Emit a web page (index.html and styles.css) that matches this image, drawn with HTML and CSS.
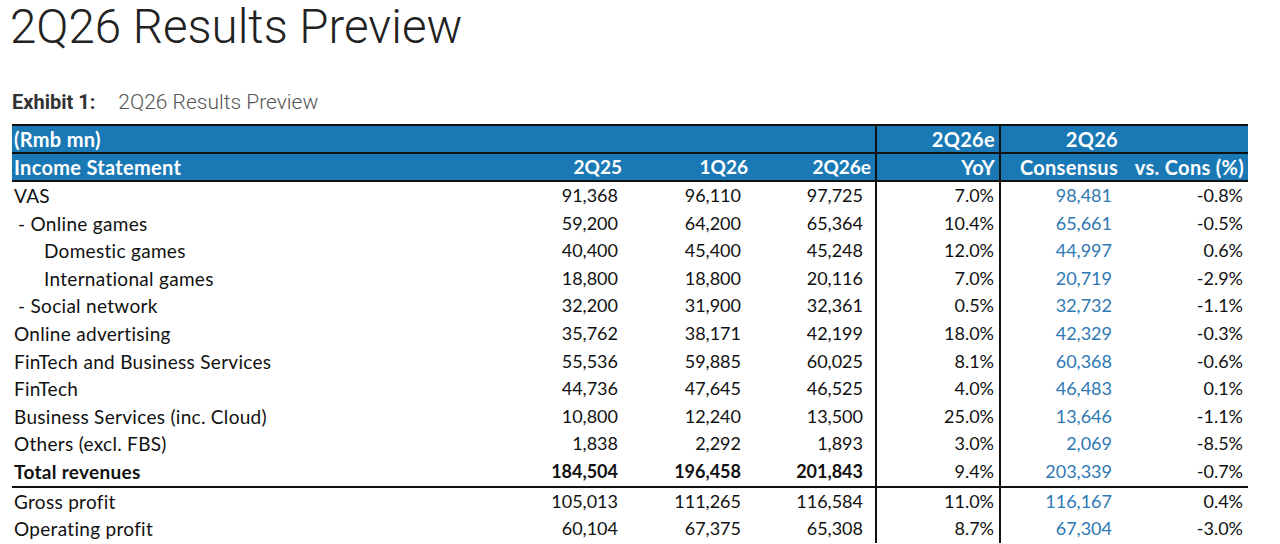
FILE: index.html
```html
<!DOCTYPE html>
<html lang="en">
<head>
<meta charset="utf-8">
<title>2Q26 Results Preview</title>
<link rel="stylesheet" href="styles.css">
</head>
<body>
<h1 class="title">2Q26 Results Preview</h1>
<div class="exhibit"><span class="ex-label">Exhibit 1:</span><span class="ex-name">2Q26 Results Preview</span></div>
<table class="fin">
  <colgroup>
    <col class="c-label"><col class="c-b"><col class="c-c"><col class="c-d"><col class="c-e"><col class="c-f"><col class="c-g">
  </colgroup>
  <thead>
    <tr class="h1row">
      <th class="lbl" colspan="4">(Rmb mn)</th>
      <th class="sep">2Q26e</th>
      <th class="sep">2Q26</th>
      <th></th>
    </tr>
    <tr class="h2row">
      <th class="lbl">Income Statement</th>
      <th class="num">2Q25</th>
      <th class="num">1Q26</th>
      <th class="num">2Q26e</th>
      <th class="sep">YoY</th>
      <th class="sep">Consensus</th>
      <th>vs. Cons (%)</th>
    </tr>
  </thead>
  <tbody>
    <tr><td class="lbl">VAS</td><td>91,368</td><td>96,110</td><td>97,725</td><td class="sep">7.0%</td><td class="sep cons">98,481</td><td>-0.8%</td></tr>
    <tr><td class="lbl ind1">- Online games</td><td>59,200</td><td>64,200</td><td>65,364</td><td class="sep">10.4%</td><td class="sep cons">65,661</td><td>-0.5%</td></tr>
    <tr><td class="lbl ind2">Domestic games</td><td>40,400</td><td>45,400</td><td>45,248</td><td class="sep">12.0%</td><td class="sep cons">44,997</td><td>0.6%</td></tr>
    <tr><td class="lbl ind2">International games</td><td>18,800</td><td>18,800</td><td>20,116</td><td class="sep">7.0%</td><td class="sep cons">20,719</td><td>-2.9%</td></tr>
    <tr><td class="lbl ind1">- Social network</td><td>32,200</td><td>31,900</td><td>32,361</td><td class="sep">0.5%</td><td class="sep cons">32,732</td><td>-1.1%</td></tr>
    <tr><td class="lbl">Online advertising</td><td>35,762</td><td>38,171</td><td>42,199</td><td class="sep">18.0%</td><td class="sep cons">42,329</td><td>-0.3%</td></tr>
    <tr><td class="lbl">FinTech and Business Services</td><td>55,536</td><td>59,885</td><td>60,025</td><td class="sep">8.1%</td><td class="sep cons">60,368</td><td>-0.6%</td></tr>
    <tr><td class="lbl">FinTech</td><td>44,736</td><td>47,645</td><td>46,525</td><td class="sep">4.0%</td><td class="sep cons">46,483</td><td>0.1%</td></tr>
    <tr><td class="lbl">Business Services (inc. Cloud)</td><td>10,800</td><td>12,240</td><td>13,500</td><td class="sep">25.0%</td><td class="sep cons">13,646</td><td>-1.1%</td></tr>
    <tr><td class="lbl">Others (excl. FBS)</td><td>1,838</td><td>2,292</td><td>1,893</td><td class="sep">3.0%</td><td class="sep cons">2,069</td><td>-8.5%</td></tr>
    <tr class="total"><td class="lbl b">Total revenues</td><td class="b">184,504</td><td class="b">196,458</td><td class="b">201,843</td><td class="sep">9.4%</td><td class="sep cons">203,339</td><td>-0.7%</td></tr>
    <tr><td class="lbl">Gross profit</td><td>105,013</td><td>111,265</td><td>116,584</td><td class="sep">11.0%</td><td class="sep cons">116,167</td><td>0.4%</td></tr>
    <tr><td class="lbl">Operating profit</td><td>60,104</td><td>67,375</td><td>65,308</td><td class="sep">8.7%</td><td class="sep cons">67,304</td><td>-3.0%</td></tr>
  </tbody>
</table>
</body>
</html>
```
FILE: styles.css
```css
html, body {
  margin: 0;
  padding: 0;
  background: #ffffff;
}
body {
  font-family: Roboto, "Liberation Sans", sans-serif;
  color: #222;
}
.title {
  margin: 3px 0 0 10px;
  font-family: Roboto, sans-serif;
  font-weight: 300;
  font-size: 47.5px;
  line-height: 48px;
  color: #222;
}
.exhibit {
  margin: 39px 0 0 12px;
  font-size: 20px;
  line-height: 24px;
  height: 24px;
  white-space: nowrap;
}
.ex-label {
  font-weight: 700;
  color: #333;
  margin-right: 23px;
}
.ex-name {
  font-weight: 300;
  color: #555;
  font-size: 21px;
}
.fin {
  margin: 10px 0 0 12px;
  width: 1236px;
  table-layout: fixed;
  border-collapse: separate;
  border-spacing: 0;
  font-family: Lato, "Open Sans", sans-serif;
  font-size: 18px;
  color: #111;
}
.c-label { width: 488px; }
.c-b { width: 124px; }
.c-c { width: 126px; }
.c-d { width: 125px; }
.c-e { width: 124px; }
.c-f { width: 123px; }
.c-g { width: 126px; }
.fin th {
  background: #1a79b5;
  color: #fff;
  font-weight: 700;
  font-size: 20px;
  letter-spacing: 0.3px;
  text-align: right;
  padding: 0 4px 0 0;
  height: 26px;
  line-height: 26px;
  white-space: nowrap;
}
.fin th.num { font-size: 19px; letter-spacing: 0; }
.h1row th { border-top: 2px solid #111; border-bottom: 2px solid #111; }
.h2row th { border-bottom: 2px solid #111; }
.fin td {
  text-align: right;
  padding: 0 6px 0 0;
  height: 27.6px;
  line-height: 27.6px;
  white-space: nowrap;
}
.fin td.lbl {
  text-align: left;
  padding-left: 2px;
  font-size: 19px;
  letter-spacing: 0.3px;
}
.fin td.ind1 { padding-left: 6px; }
.fin td.ind2 { padding-left: 32px; }
.fin .sep { border-left: 2px solid #111; }
.fin .cons { color: #2e78b3; }
.fin .b { font-weight: 700; }
.total td { border-bottom: 2px solid #111; }
.fin td:nth-child(3) { padding-right: 9px; }
.fin td:nth-child(4) { padding-right: 12px; }
.fin td:nth-child(5) { padding-right: 5px; }
.fin td:nth-child(6) { padding-right: 10px; }
.fin td:nth-child(7) { padding-right: 5px; }
.h2row th:nth-child(2) { padding-right: 2px; }
.h2row th:nth-child(3) { padding-right: 2px; }
.h2row th:nth-child(4) { padding-right: 4px; }
.fin th.lbl { padding-left: 2px; text-align: left; }
```
